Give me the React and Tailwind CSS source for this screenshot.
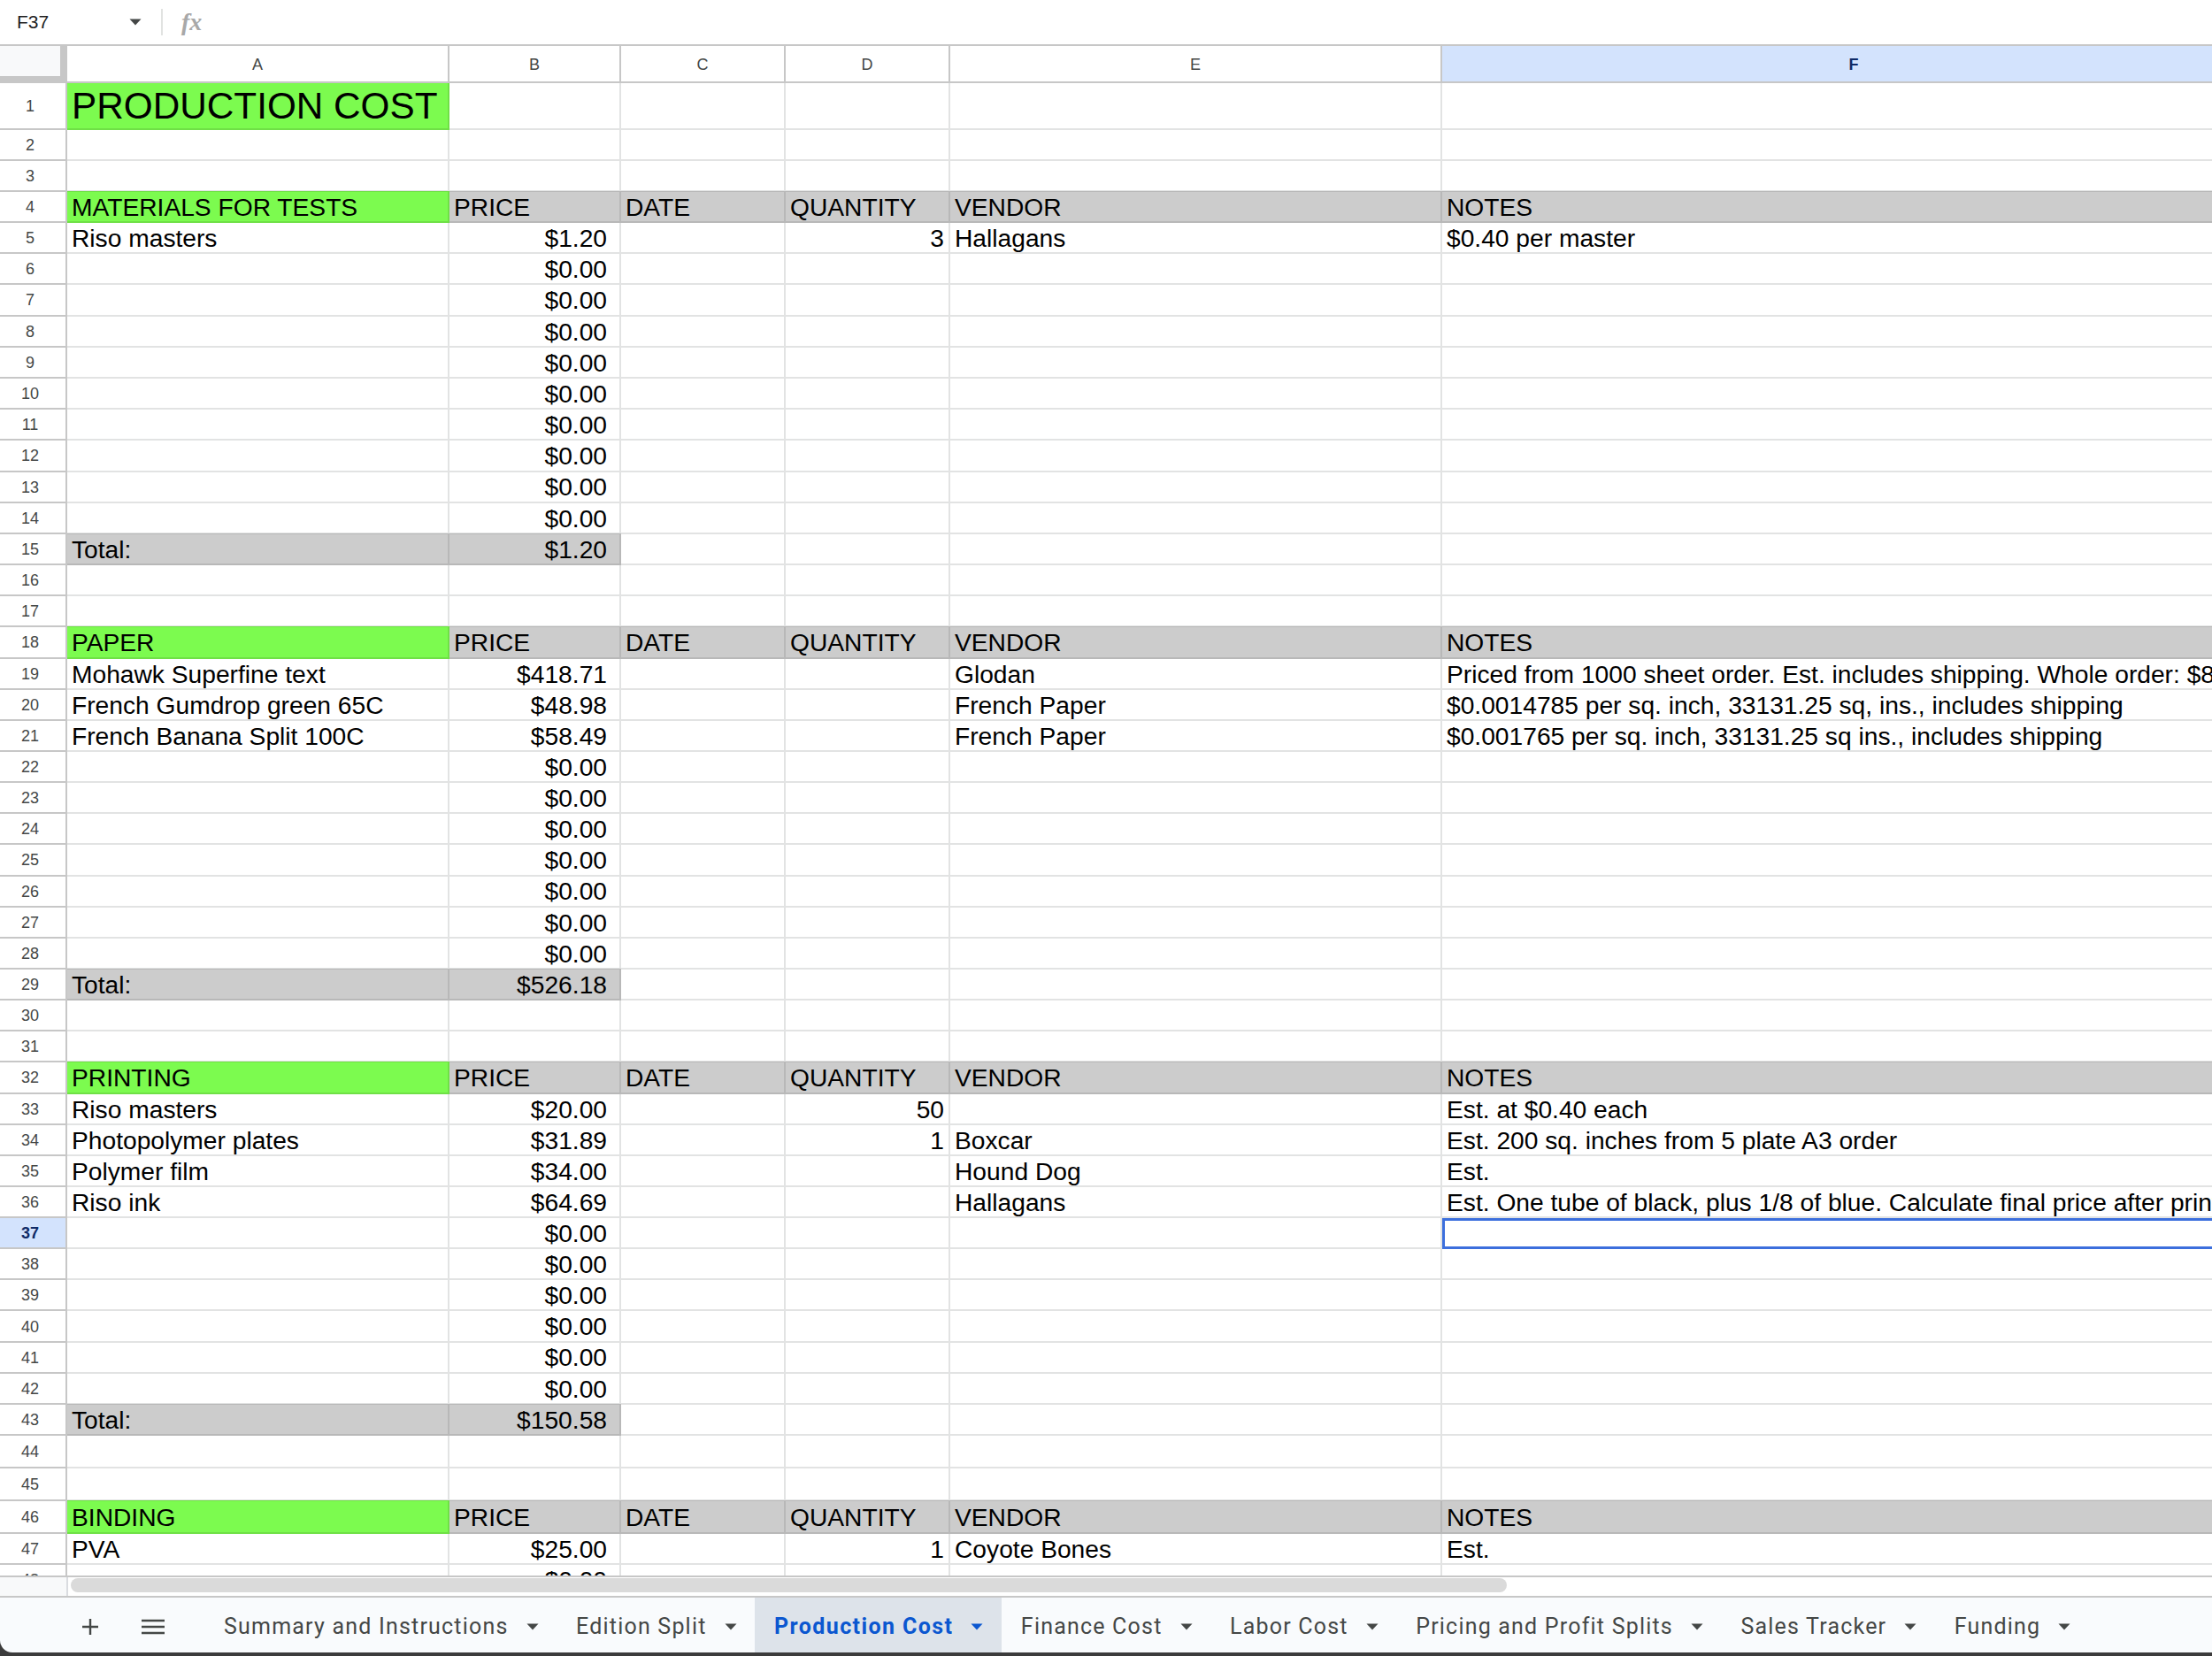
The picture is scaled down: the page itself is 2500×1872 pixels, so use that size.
const sections = [
  {
    start: 4,
    name: "MATERIALS FOR TESTS",
    total: "$1.20",
    items: [
      { a: "Riso masters", b: "$1.20", d: "3", e: "Hallagans", f: "$0.40 per master" },
    ],
  },
  {
    start: 18,
    name: "PAPER",
    total: "$526.18",
    items: [
      { a: "Mohawk Superfine text", b: "$418.71", e: "Glodan", f: "Priced from 1000 sheet order. Est. includes shipping. Whole order: $835.42" },
      { a: "French Gumdrop green 65C", b: "$48.98", e: "French Paper", f: "$0.0014785 per sq. inch, 33131.25 sq, ins., includes shipping" },
      { a: "French Banana Split 100C", b: "$58.49", e: "French Paper", f: "$0.001765 per sq. inch, 33131.25 sq ins., includes shipping" },
    ],
  },
  {
    start: 32,
    name: "PRINTING",
    total: "$150.58",
    items: [
      { a: "Riso masters", b: "$20.00", d: "50", f: "Est. at $0.40 each" },
      { a: "Photopolymer plates", b: "$31.89", d: "1", e: "Boxcar", f: "Est. 200 sq. inches from 5 plate A3 order" },
      { a: "Polymer film", b: "$34.00", e: "Hound Dog", f: "Est." },
      { a: "Riso ink", b: "$64.69", e: "Hallagans", f: "Est. One tube of black, plus 1/8 of blue. Calculate final price after printing." },
    ],
  },
];

const tabs = [
  "Summary and Instructions",
  "Edition Split",
  "Production Cost",
  "Finance Cost",
  "Labor Cost",
  "Pricing and Profit Splits",
  "Sales Tracker",
  "Funding",
];

const widths = {
  a: "w-[432px]",
  b: "w-[194px]",
  c: "w-[186px]",
  d: "w-[186px]",
  e: "w-[556px]",
  f: "w-[932px]",
};

const heights = {
  1: "h-[53px]",
  18: "h-[36px]",
  32: "h-[36px]",
  44: "h-[37px]",
  45: "h-[37px]",
  46: "h-[37px]",
};

function rowHeight(n) {
  if (heights[n]) return heights[n];
  if ((n >= 5 && n <= 14)) return "h-[35.2px]";
  if ((n >= 19 && n <= 28) || (n >= 33 && n <= 42)) return "h-[35.1px]";
  return "h-[35px]";
}

function Cell({ col, kind, right, pad, children }) {
  const looks = {
    title: "bg-[#7cfb4f] border-[#6fe046]",
    green: "bg-[#7cfb4f] border-[#6fe046] shadow-[0_-1px_0_#6fe046]",
    gray: "bg-[#cccccc] border-[#b8b8b8] shadow-[0_-1px_0_#b8b8b8]",
  };
  const look = looks[kind] || "bg-white border-[#e2e3e3]";
  return (
    <div
      className={`${widths[col]} ${look} ${right ? "justify-end" : "justify-start pl-[5px]"} ${pad || ""} shrink-0 flex items-center border-r-2 border-b-2 whitespace-nowrap pt-[1px]`}
    >
      {children}
    </div>
  );
}

function Row({ n, selected, children }) {
  return (
    <div className={`${rowHeight(n)} flex shrink-0 text-[28.2px] text-black font-['Liberation_Sans',Arial,sans-serif]`}>
      <div
        className={`w-[76px] shrink-0 flex items-center justify-center pr-[6px] pt-[2px] border-r-2 border-b-2 border-[#c7c7c7] text-[18px] ${
          selected ? "bg-[#d3e3fd] font-bold text-[#0f2a66]" : "bg-white text-[#444746]"
        }`}
      >
        {n}
      </div>
      {children}
    </div>
  );
}

function BlankRow({ n }) {
  return (
    <Row n={n}>
      <Cell col="a" />
      <Cell col="b" />
      <Cell col="c" />
      <Cell col="d" />
      <Cell col="e" />
      <Cell col="f" />
    </Row>
  );
}

function HeaderRow({ n, name }) {
  return (
    <Row n={n}>
      <Cell col="a" kind="green">{name}</Cell>
      <Cell col="b" kind="gray">PRICE</Cell>
      <Cell col="c" kind="gray">DATE</Cell>
      <Cell col="d" kind="gray">QUANTITY</Cell>
      <Cell col="e" kind="gray">VENDOR</Cell>
      <Cell col="f" kind="gray">NOTES</Cell>
    </Row>
  );
}

function ItemRow({ n, item = {}, selected }) {
  return (
    <Row n={n} selected={selected}>
      <Cell col="a">{item.a}</Cell>
      <Cell col="b" right pad="pr-[14px]">{item.b || "$0.00"}</Cell>
      <Cell col="c" />
      <Cell col="d" right pad="pr-[5px]">{item.d}</Cell>
      <Cell col="e">{item.e}</Cell>
      {selected ? (
        <div className="w-[932px] shrink-0 border-[3px] border-[#3c6fdd] bg-white" />
      ) : (
        <Cell col="f">{item.f}</Cell>
      )}
    </Row>
  );
}

function TotalRow({ n, total }) {
  return (
    <Row n={n}>
      <Cell col="a" kind="gray">Total:</Cell>
      <Cell col="b" kind="gray" right pad="pr-[14px]">{total}</Cell>
      <Cell col="c" />
      <Cell col="d" />
      <Cell col="e" />
      <Cell col="f" />
    </Row>
  );
}

function ColumnHeader({ col, label, active }) {
  return (
    <div
      className={`${widths[col]} shrink-0 flex items-center justify-center pt-[2px] border-r-2 border-b-2 border-[#c7c7c7] text-[18px] font-['Liberation_Sans',Arial,sans-serif] ${
        active ? "bg-[#d3e3fd] font-bold text-[#0f2a66]" : "bg-white text-[#444746]"
      }`}
    >
      {label}
    </div>
  );
}

function Section({ section }) {
  const { start, name, items, total } = section;
  const rows = [];
  for (let i = 0; i < 10; i++) {
    const n = start + 1 + i;
    rows.push(<ItemRow key={n} n={n} item={items[i]} selected={n === 37} />);
  }
  return (
    <>
      <HeaderRow n={start} name={name} />
      {rows}
      <TotalRow n={start + 11} total={total} />
      <BlankRow n={start + 12} />
      <BlankRow n={start + 13} />
    </>
  );
}

function Caret({ className }) {
  return (
    <svg width="14" height="8" viewBox="0 0 14 8" className={className}>
      <path d="M0.5 0.5h13L7 7.5z" fill="currentColor" />
    </svg>
  );
}

export default function App() {
  return (
    <div className="w-[2500px] h-[1872px] overflow-hidden flex flex-col bg-[#3c3c3c] font-['Roboto',sans-serif]">
      {/* Formula bar */}
      <div className="h-[52px] shrink-0 flex items-center bg-white border-b-2 border-[#c7c7c7] text-[#1f1f1f]">
        <div className="w-[182px] flex items-center justify-between pl-[19px] pr-[22px] text-[21px] font-['Liberation_Sans',Arial,sans-serif]">
          <span>F37</span>
          <Caret className="text-[#444746]" />
        </div>
        <div className="w-[2px] h-[30px] bg-[#e1e3e1]" />
        <span className="ml-[21px] font-['Liberation_Serif',serif] italic font-bold text-[28px] leading-none text-[#a8a8a8]">fx</span>
      </div>

      {/* Grid */}
      <div className="h-[1729px] shrink-0 overflow-hidden bg-white">
        <div className="h-[42px] flex">
          <div className="w-[76px] shrink-0 bg-[#c7c7c7] pr-[8px] pb-[8px]">
            <div className="h-full bg-[#f8f9fa]" />
          </div>
          <ColumnHeader col="a" label="A" />
          <ColumnHeader col="b" label="B" />
          <ColumnHeader col="c" label="C" />
          <ColumnHeader col="d" label="D" />
          <ColumnHeader col="e" label="E" />
          <ColumnHeader col="f" label="F" active />
        </div>
        <Row n={1}>
          <Cell col="a" kind="title">
            <span className="text-[42.3px] leading-none">PRODUCTION COST</span>
          </Cell>
          <Cell col="b" />
          <Cell col="c" />
          <Cell col="d" />
          <Cell col="e" />
          <Cell col="f" />
        </Row>
        <BlankRow n={2} />
        <BlankRow n={3} />
        {sections.map((s) => (
          <Section key={s.start} section={s} />
        ))}
        <HeaderRow n={46} name="BINDING" />
        <ItemRow n={47} item={{ a: "PVA", b: "$25.00", d: "1", e: "Coyote Bones", f: "Est." }} />
        <ItemRow n={48} />
      </div>

      {/* Horizontal scrollbar */}
      <div className="h-[23px] shrink-0 flex bg-white border-t-2 border-[#c7c7c7]">
        <div className="w-[77px] shrink-0 bg-[#f8f9fa] border-r-2 border-[#dadce0]" />
        <div className="w-[1623px] h-[16px] mt-[1px] ml-[3px] rounded-[8px] bg-[#dadada]" />
      </div>

      {/* Sheet tabs */}
      <div className="h-[64px] shrink-0 flex items-stretch pl-[92px] bg-[#f9fbfd] border-t-2 border-[#c7c7c7] rounded-bl-[14px] text-[#444746] text-[25px] tracking-[1.2px]">
        <div className="flex items-center w-[139px] pt-[3px]">
          <svg width="20" height="20" viewBox="0 0 20 20">
            <path d="M10 1v18M1 10h18" stroke="currentColor" strokeWidth="2.4" fill="none" />
          </svg>
          <svg width="26" height="18" viewBox="0 0 26 18" className="ml-[48px]">
            <path d="M0 2h26M0 9h26M0 16h26" stroke="currentColor" strokeWidth="2.6" fill="none" />
          </svg>
        </div>
        {tabs.map((tab) => {
          const active = tab === "Production Cost";
          return (
            <div
              key={tab}
              className={`flex items-center gap-[20px] pl-[22px] pr-[20.5px] pt-[3px] ${
                active ? "bg-[#dde3ea] text-[#0b57d0] font-bold tracking-[1.4px]" : ""
              }`}
            >
              <span className="whitespace-nowrap">{tab}</span>
              <Caret className="w-[14px]" />
            </div>
          );
        })}
      </div>
    </div>
  );
}
